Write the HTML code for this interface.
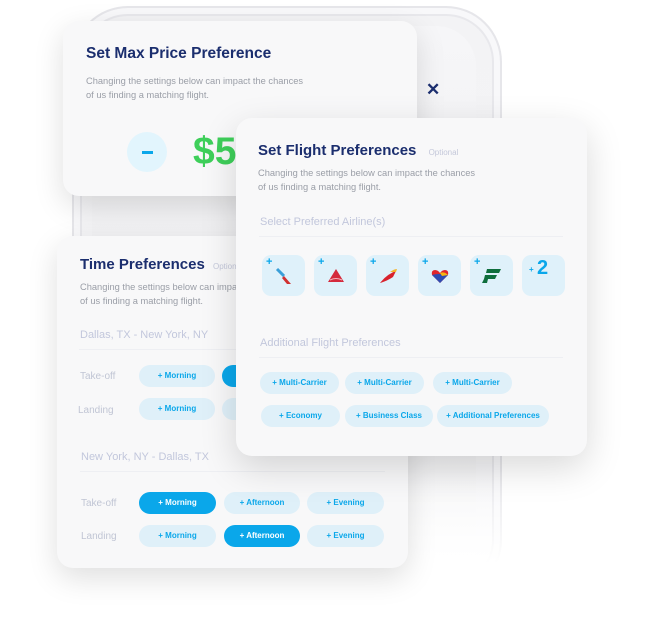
<!DOCTYPE html>
<html><head><meta charset="utf-8"><style>
*{margin:0;padding:0;box-sizing:border-box}
body{width:645px;height:626px;background:#fff;position:relative;overflow:hidden;font-family:"Liberation Sans",sans-serif}
.abs{position:absolute}
.phone{left:72px;top:6px;width:430px;height:590px;border-radius:56px;background:linear-gradient(#f3f3f5,#f5f5f7 80%,#fff);border:2px solid #e6e6ea;box-shadow:inset 0 0 0 6px #f8f8fa,inset 0 0 0 8px #e8e8ec}
.screen{left:92px;top:26px;width:384px;height:560px;border-radius:40px;background:linear-gradient(#f6f6f8,#eeeef0 70%,#fff)}
.fade{left:60px;top:470px;width:460px;height:156px;background:linear-gradient(rgba(255,255,255,0),#fff 60%)}
.card{background:#f8f8f9;border-radius:16px;box-shadow:0 10px 30px rgba(0,0,0,.13)}
.t{color:#1b2e6e;font-weight:bold;font-size:15px;white-space:nowrap}
.s{color:#9a9ea7;font-size:9.3px;line-height:14px;white-space:nowrap}
.opt{color:#c4c8da;font-size:8px}
.h{color:#c2c7dc;font-size:11px;white-space:nowrap}
.line{height:1px;background:#eeeff3}
.chip{position:absolute;height:22px;border-radius:11px;background:#dff0f9;color:#0aa7ea;font-size:8px;font-weight:bold;text-align:center;line-height:22px;white-space:nowrap}
.on{background:#0aa7ea;color:#fff}
.lab{position:absolute;color:#c0c5d4;font-size:10px}
.ic{position:absolute;top:255px;width:43px;height:41px;border-radius:9px;background:#dff1fa}
.ic .p{position:absolute;left:4px;top:1px;color:#0aa7ea;font-weight:bold;font-size:11px}
</style></head><body>
<div class="abs phone"></div>
<div class="abs screen"></div>
<div class="abs fade"></div>

<!-- Max price card -->
<div class="abs card" style="left:63px;top:21px;width:354px;height:175px"></div>
<div class="abs t" style="left:86px;top:45px;font-size:15.5px">Set Max Price Preference</div>
<div class="abs s" style="left:86px;top:74px">Changing the settings below can impact the chances<br>of us finding a matching flight.</div>
<div class="abs" style="left:426px;top:80px;color:#1b2e6e;font-size:17px;font-weight:bold">✕</div>
<div class="abs" style="left:127px;top:132px;width:40px;height:40px;border-radius:50%;background:#e2f5fd"></div>
<div class="abs" style="left:142px;top:151px;width:11px;height:3px;background:#0aa7ea"></div>
<div class="abs" style="left:193px;top:130px;color:#3ecf5a;font-size:39px;font-weight:bold;line-height:44px">$5</div>

<!-- Time card -->
<div class="abs card" style="left:57px;top:236px;width:351px;height:332px"></div>
<div class="abs t" style="left:80px;top:256px">Time Preferences <span class="opt" style="font-weight:normal;margin-left:4px">Optional</span></div>
<div class="abs s" style="left:80px;top:280px">Changing the settings below can impact the chances<br>of us finding a matching flight.</div>
<div class="abs h" style="left:80px;top:329px">Dallas, TX - New York, NY</div>
<div class="abs line" style="left:79px;top:349px;width:305px"></div>
<div class="lab" style="left:80px;top:371px">Take-off</div>
<div class="chip" style="left:139px;top:365px;width:76px">+ Morning</div>
<div class="chip on" style="left:222px;top:365px;width:76px">+ Afternoon</div>
<div class="lab" style="left:78px;top:405px">Landing</div>
<div class="chip" style="left:139px;top:398px;width:76px">+ Morning</div>
<div class="chip" style="left:222px;top:398px;width:76px">+ Afternoon</div>
<div class="abs h" style="left:81px;top:451px">New York, NY - Dallas, TX</div>
<div class="abs line" style="left:80px;top:471px;width:305px"></div>
<div class="lab" style="left:81px;top:498px">Take-off</div>
<div class="chip on" style="left:139px;top:492px;width:77px">+ Morning</div>
<div class="chip" style="left:224px;top:492px;width:76px">+ Afternoon</div>
<div class="chip" style="left:307px;top:492px;width:77px">+ Evening</div>
<div class="lab" style="left:81px;top:531px">Landing</div>
<div class="chip" style="left:139px;top:525px;width:77px">+ Morning</div>
<div class="chip on" style="left:224px;top:525px;width:76px">+ Afternoon</div>
<div class="chip" style="left:307px;top:525px;width:77px">+ Evening</div>

<!-- Flight card -->
<div class="abs card" style="left:236px;top:118px;width:351px;height:338px;box-shadow:0 12px 36px rgba(0,0,0,.15)"></div>
<div class="abs t" style="left:258px;top:142px">Set Flight Preferences <span class="opt" style="font-weight:normal;margin-left:8px">Optional</span></div>
<div class="abs s" style="left:258px;top:166px">Changing the settings below can impact the chances<br>of us finding a matching flight.</div>
<div class="abs h" style="left:260px;top:216px">Select Preferred Airline(s)</div>
<div class="abs line" style="left:259px;top:236px;width:304px"></div>

<div class="ic" style="left:262px"><span class="p">+</span>
<svg class="abs" style="left:11px;top:11px" width="22" height="22"><path d="M4 3 L11 10" stroke="#3a9fd8" stroke-width="3"/><path d="M11 10 L18 18 L14 18 L9 12Z" fill="#d03030"/></svg></div>
<div class="ic" style="left:314px"><span class="p">+</span>
<svg class="abs" style="left:13px;top:13px" width="18" height="16"><path d="M9 1 L17 14 L1 14Z" fill="#d42a3c"/><path d="M3 12 Q9 9 15 12" stroke="#f3b3bb" fill="none"/></svg></div>
<div class="ic" style="left:366px"><span class="p">+</span>
<svg class="abs" style="left:11px;top:11px" width="22" height="20"><path d="M3 17 Q10 8 19 5 L16 11 Q10 15 3 17Z" fill="#d8222c"/><path d="M13 6 Q17 3 20 3 L19 6Z" fill="#f5b42a"/></svg></div>
<div class="ic" style="left:418px"><span class="p">+</span>
<svg class="abs" style="left:12px;top:12px" width="20" height="18"><path d="M10 16 L2 8 Q1 3 5 3 Q8 3 10 6 Q12 3 15 3 Q19 3 18 8Z" fill="#e2252b"/><path d="M2 8 Q8 6 18 8 L10 16Z" fill="#304cb2"/><path d="M10 6 Q14 4 18 8 L12 9Z" fill="#f9b612"/></svg></div>
<div class="ic" style="left:470px"><span class="p">+</span>
<svg class="abs" style="left:12px;top:13px" width="20" height="16"><path d="M5 1 L19 1 L17 5 L4 5Z M3 7 L15 7 L13 11 L2 11Z M2 11 L6 11 L5 15 L0 15Z" fill="#0f6e3c"/></svg></div>
<div class="ic" style="left:522px"><span class="abs" style="left:7px;top:10px;color:#0aa7ea;font-weight:bold;font-size:8px">+</span><span class="abs" style="left:15px;top:2px;color:#0aa7ea;font-weight:bold;font-size:20px">2</span></div>

<div class="abs h" style="left:260px;top:337px">Additional Flight Preferences</div>
<div class="abs line" style="left:259px;top:357px;width:304px"></div>
<div class="chip" style="left:260px;top:372px;width:79px">+ Multi-Carrier</div>
<div class="chip" style="left:345px;top:372px;width:79px">+ Multi-Carrier</div>
<div class="chip" style="left:433px;top:372px;width:79px">+ Multi-Carrier</div>
<div class="chip" style="left:261px;top:405px;width:79px">+ Economy</div>
<div class="chip" style="left:345px;top:405px;width:88px">+ Business Class</div>
<div class="chip" style="left:437px;top:405px;width:112px">+ Additional Preferences</div>
</body></html>
